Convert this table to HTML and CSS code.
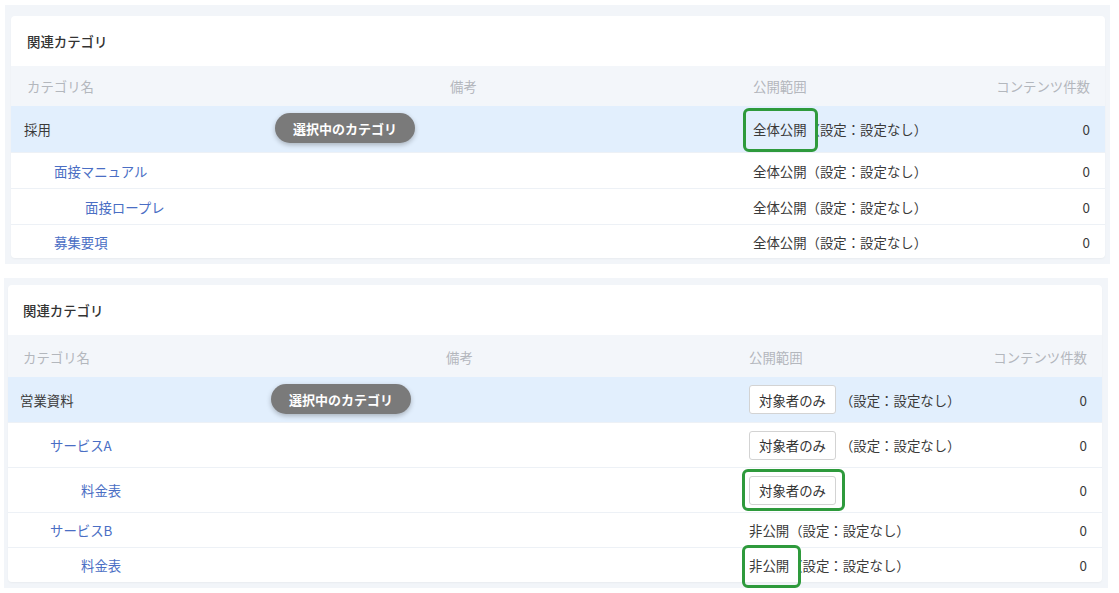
FILE: index.html
```html
<!DOCTYPE html>
<html lang="ja">
<head>
<meta charset="utf-8">
<title>関連カテゴリ</title>
<link rel="stylesheet" href="styles.css">
</head>
<body>
<div class="page">
  <section class="panel panel--a">
    <div class="card">
      <div class="card-title card-title--a">関連カテゴリ</div>
      <div class="row row--head">
        <div class="cell cell--headname">カテゴリ名</div>
        <div class="cell">備考</div>
        <div class="cell">公開範囲</div>
        <div class="cell cell--count">コンテンツ件数</div>
      </div>
      <div class="row row--selected row--h46">
        <div class="cell cell--name">採用</div>
        <div class="cell"></div>
        <div class="cell"><span class="mark mark--a">全体公開</span>（設定：設定なし）</div>
        <div class="cell cell--count">0</div>
        <span class="pill pill--a">選択中のカテゴリ</span>
      </div>
      <div class="row row--h36">
        <div class="cell cell--name cell--lv1"><a class="link">面接マニュアル</a></div>
        <div class="cell"></div>
        <div class="cell">全体公開（設定：設定なし）</div>
        <div class="cell cell--count">0</div>
      </div>
      <div class="row row--h36">
        <div class="cell cell--name cell--lv2"><a class="link">面接ロープレ</a></div>
        <div class="cell"></div>
        <div class="cell">全体公開（設定：設定なし）</div>
        <div class="cell cell--count">0</div>
      </div>
      <div class="row row--h34">
        <div class="cell cell--name cell--lv1"><a class="link">募集要項</a></div>
        <div class="cell"></div>
        <div class="cell">全体公開（設定：設定なし）</div>
        <div class="cell cell--count">0</div>
      </div>
    </div>
  </section>

  <section class="panel panel--b">
    <div class="card">
      <div class="card-title card-title--b">関連カテゴリ</div>
      <div class="row row--head row--b">
        <div class="cell cell--headname">カテゴリ名</div>
        <div class="cell">備考</div>
        <div class="cell">公開範囲</div>
        <div class="cell cell--count">コンテンツ件数</div>
      </div>
      <div class="row row--b row--selected row--h45">
        <div class="cell cell--name">営業資料</div>
        <div class="cell"></div>
        <div class="cell"><span class="btn">対象者のみ</span><span class="note">（設定：設定なし）</span></div>
        <div class="cell cell--count">0</div>
        <span class="pill pill--b">選択中のカテゴリ</span>
      </div>
      <div class="row row--b row--h45">
        <div class="cell cell--name cell--lv1"><a class="link">サービスA</a></div>
        <div class="cell"></div>
        <div class="cell"><span class="btn">対象者のみ</span><span class="note">（設定：設定なし）</span></div>
        <div class="cell cell--count">0</div>
      </div>
      <div class="row row--b row--h45">
        <div class="cell cell--name cell--lv2"><a class="link">料金表</a></div>
        <div class="cell"></div>
        <div class="cell"><span class="btn mark mark--btn">対象者のみ</span></div>
        <div class="cell cell--count">0</div>
      </div>
      <div class="row row--b row--h35">
        <div class="cell cell--name cell--lv1"><a class="link">サービスB</a></div>
        <div class="cell"></div>
        <div class="cell">非公開（設定：設定なし）</div>
        <div class="cell cell--count">0</div>
      </div>
      <div class="row row--b row--h35">
        <div class="cell cell--name cell--lv2"><a class="link">料金表</a></div>
        <div class="cell"></div>
        <div class="cell"><span class="mark mark--c">非公開</span>（設定：設定なし）</div>
        <div class="cell cell--count">0</div>
      </div>
    </div>
  </section>
</div>
</body>
</html>
```
FILE: styles.css
```css
* { box-sizing: border-box; }
html, body {
  margin: 0;
  padding: 0;
  background: #ffffff;
}
body {
  font-family: "Noto Sans CJK JP", "Noto Sans", sans-serif;
  font-size: 13.4px;
  color: #3a3a3a;
  width: 1119px;
  height: 593px;
  overflow: hidden;
}
.page {
  padding-top: 5px;
}
.panel {
  background: #f2f5f9;
}
.panel--a {
  margin-left: 5px;
  width: 1105px;
  padding: 11px 5px 6px 6px;
}
.panel--b {
  margin: 14px 0 0 4px;
  width: 1104px;
  padding: 7px 6px 6px 4px;
}
.card {
  background: #ffffff;
  border-radius: 4px;
  box-shadow: 0 1px 2px rgba(0, 0, 0, 0.04);
}
.card-title {
  display: flex;
  align-items: center;
  padding-left: 16px;
  font-weight: 500;
  color: #333333;
}
.card-title--a { height: 50px; }
.card-title--b { height: 50px; padding-left: 15px; }

.row {
  position: relative;
  display: grid;
  grid-template-columns: 426px 303px 1fr 120px;
  align-items: center;
  padding: 0 15px 0 13px;
  border-top: 1px solid #edf1f6;
}
.row--b { padding-left: 12px; }
.row--head {
  height: 40px;
  background: #f3f6fa;
  color: #b3b7bd;
  border-top: none;
}
.card-title--b + .row--head { height: 42px; padding-top: 2px; }
.row--selected {
  background: #e2effd;
  border-top: none;
}
.row--h46 { height: 46px; }
.row--h45 { height: 45px; }
.row--h36 { height: 36px; }
.row--h35 { height: 35px; }
.row--h34 { height: 34px; }

.cell {
  display: flex;
  align-items: center;
  white-space: nowrap;
}
.cell--headname { padding-left: 3px; }
.cell--lv1 { padding-left: 30px; }
.cell--lv2 { padding-left: 61px; }
.cell--count { justify-content: flex-end; }

.link {
  color: #4a6ec4;
  text-decoration: none;
}

.pill {
  position: absolute;
  top: 50%;
  transform: translateY(-50%);
  height: 30px;
  padding: 0 18px;
  display: flex;
  align-items: center;
  border-radius: 15px;
  background: #7a7a7a;
  color: #ffffff;
  font-size: 13px;
  font-weight: 700;
  box-shadow: 0 2px 5px rgba(0, 0, 0, 0.25);
  white-space: nowrap;
}
.pill--a { left: 264px; top: 22px; }
.pill--b { left: 263px; top: 22px; }

.btn {
  display: inline-flex;
  align-items: center;
  height: 29px;
  padding: 0 9px;
  border: 1px solid #d3d3d3;
  border-radius: 3px;
  background: #ffffff;
  color: #333333;
}
.note { margin-left: 4px; }

.mark { position: relative; }
.mark::after {
  content: "";
  position: absolute;
  border: 3px solid #2e9a3c;
  border-radius: 6px;
  z-index: 2;
}
.mark--a::after { top: -11px; bottom: -13px; left: -10px; right: -11px; }
.mark--btn::after { top: -8px; bottom: -7px; left: -8px; right: -10px; }
.mark--c::after { top: -10px; bottom: -13px; left: -7px; right: -12px; }
```
